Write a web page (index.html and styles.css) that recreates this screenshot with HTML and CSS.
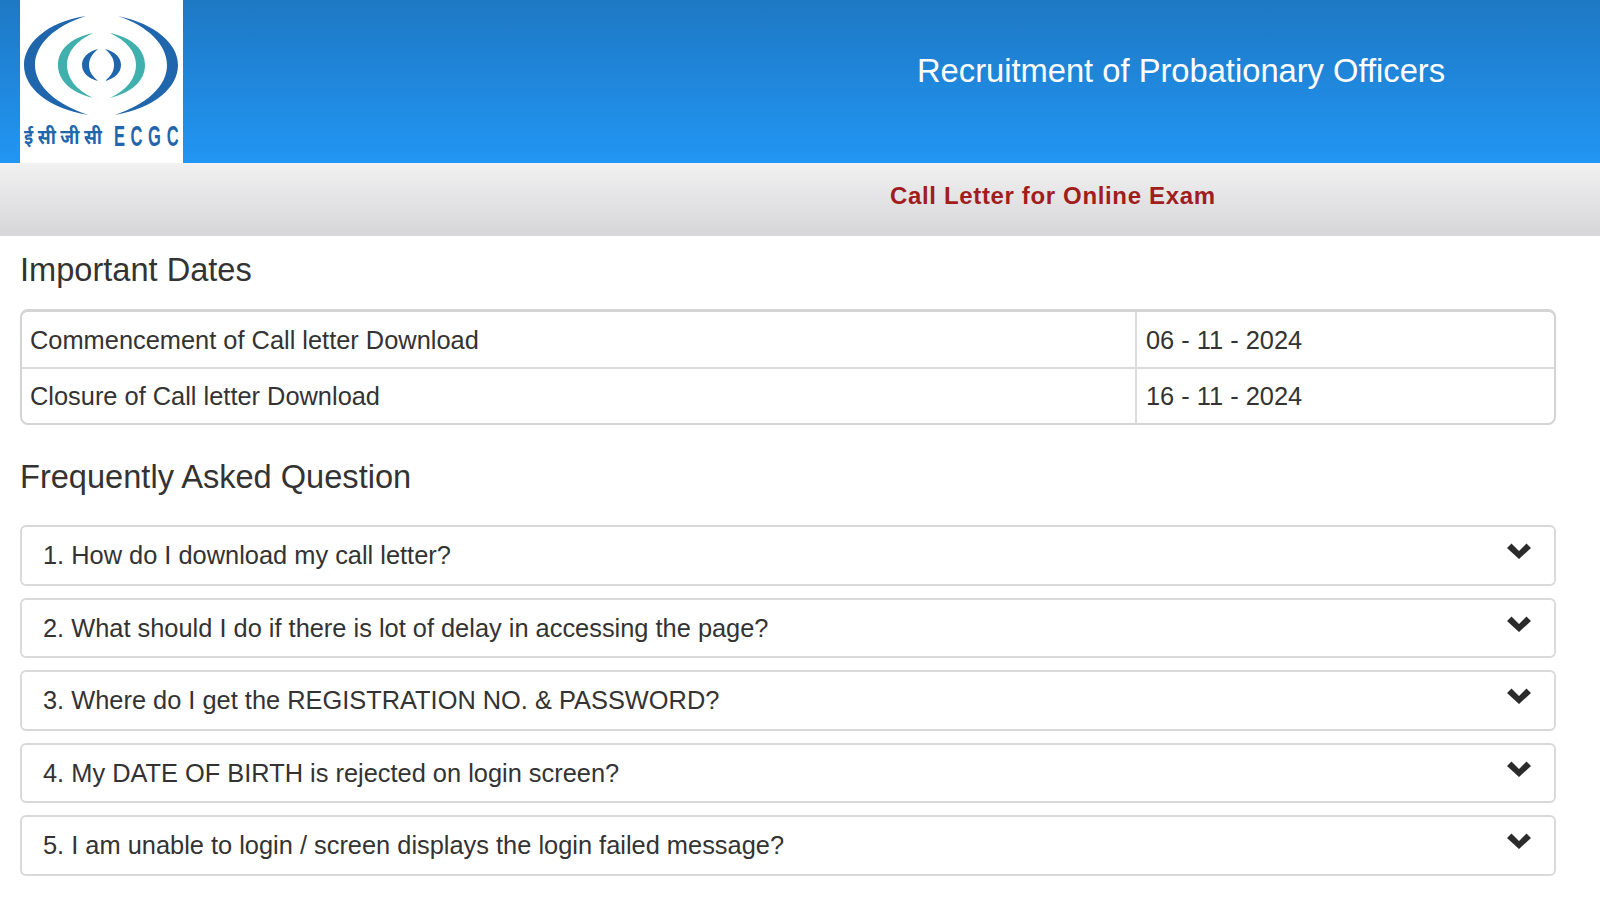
FILE: index.html
```html
<!DOCTYPE html>
<html lang="en">
<head>
<meta charset="utf-8">
<title>Recruitment of Probationary Officers</title>
<link rel="stylesheet" href="styles.css">
</head>
<body>
<header class="banner">
  <div class="logo">
    <svg class="logo-svg" viewBox="0 0 163 163" width="163" height="163">
      <path class="navy" d="M66 16 C26 22 4 44 4 65 C4 88 28 108 68 115 C36 104 15 86 15 65 C15 45 34 26 66 16 Z"/>
      <path class="navy" d="M98 16 C136 24 158 44 158 65 C158 88 134 108 95 115 C127 104 147 86 147 65 C147 45 128 26 98 16 Z"/>
      <path class="teal" d="M73 33 C50 38 38 50 38 65 C38 80 50 92 73 98 C56 90 47 78 47 65 C47 52 56 41 73 33 Z"/>
      <path class="teal" d="M90 33 C113 38 125 50 125 65 C125 80 113 92 90 98 C107 90 116 78 116 65 C116 52 107 41 90 33 Z"/>
      <path class="navy" d="M78 49 C67 52 62 58 62 65 C62 72 67 78 78 81 C72 76 69 71 69 65 C69 59 72 54 78 49 Z"/>
      <path class="navy" d="M85 49 C96 52 101 58 101 65 C101 72 96 78 85 81 C91 76 94 71 94 65 C94 59 91 54 85 49 Z"/>
      <text class="logo-hi" x="4" y="144" textLength="78" lengthAdjust="spacingAndGlyphs">ई सी जी सी</text>
      <text class="logo-en" transform="translate(94 146) scale(.55 1)" x="0 30 62 96" y="0">ECGC</text>
    </svg>
  </div>
  <h1 class="banner-title">Recruitment of Probationary Officers</h1>
</header>
<div class="subbar"><h2 class="subbar-title">Call Letter for Online Exam</h2></div>
<main class="content">
  <h3 class="section-title">Important Dates</h3>
  <div class="dates">
    <div class="date-row">
      <div class="date-label">Commencement of Call letter Download</div>
      <div class="date-value">06 - 11 - 2024</div>
    </div>
    <div class="date-row">
      <div class="date-label">Closure of Call letter Download</div>
      <div class="date-value">16 - 11 - 2024</div>
    </div>
  </div>
  <h3 class="section-title faq-title">Frequently Asked Question</h3>
  <div class="faq">
    <div class="faq-item"><span>1. How do I download my call letter?</span><svg class="chev" viewBox="0 0 24 16"><path d="M0 5 L4.5 .5 L12 8 L19.5 .5 L24 5 L12 16 Z"/></svg></div>
    <div class="faq-item"><span>2. What should I do if there is lot of delay in accessing the page?</span><svg class="chev" viewBox="0 0 24 16"><path d="M0 5 L4.5 .5 L12 8 L19.5 .5 L24 5 L12 16 Z"/></svg></div>
    <div class="faq-item"><span>3. Where do I get the REGISTRATION NO. &amp; PASSWORD?</span><svg class="chev" viewBox="0 0 24 16"><path d="M0 5 L4.5 .5 L12 8 L19.5 .5 L24 5 L12 16 Z"/></svg></div>
    <div class="faq-item"><span>4. My DATE OF BIRTH is rejected on login screen?</span><svg class="chev" viewBox="0 0 24 16"><path d="M0 5 L4.5 .5 L12 8 L19.5 .5 L24 5 L12 16 Z"/></svg></div>
    <div class="faq-item"><span>5. I am unable to login / screen displays the login failed message?</span><svg class="chev" viewBox="0 0 24 16"><path d="M0 5 L4.5 .5 L12 8 L19.5 .5 L24 5 L12 16 Z"/></svg></div>
  </div>
</main>
</body>
</html>
```

FILE: styles.css
```css
* { box-sizing: border-box; }
html, body { margin: 0; padding: 0; }
body {
  width: 1600px;
  height: 900px;
  overflow: hidden;
  background: #fff;
  color: #333;
  font-family: "Liberation Sans", Arial, sans-serif;
}
.banner {
  display: flex;
  height: 163px;
  background: linear-gradient(to bottom, #1e78c4, #2196f3);
}
.logo {
  width: 163px;
  height: 163px;
  margin-left: 20px;
  background: #fff;
  flex: none;
}
.logo-svg { display: block; }
.navy { fill: #1f66ad; }
.teal { fill: #3fb0ad; }
.logo-hi {
  font-family: "Noto Sans", "Liberation Sans", sans-serif;
  font-size: 20px;
  font-weight: 700;
  fill: #1f66ad;
}
.logo-en {
  font-family: "Liberation Sans", sans-serif;
  font-size: 30px;
  font-weight: 700;
  fill: #1f66ad;
}
.banner-title {
  margin: 0;
  padding: 53px 0 0 734px;
  font-size: 32.7px;
  line-height: 36px;
  font-weight: 400;
  color: #fff;
  white-space: nowrap;
}
.subbar {
  height: 73px;
  padding: 20px 0 0 890px;
  background: linear-gradient(to bottom, #f1f1f2, #d6d6d8);
}
.subbar-title {
  margin: 0;
  font-size: 24px;
  line-height: 26px;
  font-weight: 700;
  letter-spacing: .65px;
  color: #a11d1d;
}
.content { padding: 0 44px 0 20px; }
.section-title {
  margin: 0;
  padding-top: 16px;
  font-size: 32.6px;
  line-height: 36px;
  font-weight: 400;
}
.faq-title { padding-top: 34px; }
.dates {
  margin-top: 21px;
  height: 116px;
  border: 2px solid #d4d4d4;
  border-top-width: 3px;
  border-radius: 8px;
}
.date-row {
  display: flex;
  height: 55px;
  font-size: 25.4px;
  line-height: 57px;
}
.date-row + .date-row { height: 56px; line-height: 55px; border-top: 2px solid #dcdcdc; }
.date-label { width: 1113px; padding-left: 8px; }
.date-value { flex: 1; padding-left: 9px; border-left: 2px solid #dcdcdc; }
.faq { margin-top: 30px; }
.faq-item {
  display: flex;
  justify-content: space-between;
  height: 60.5px;
  margin-bottom: 12px;
  padding: 0 23px 0 21px;
  border: 2px solid #d9d9d9;
  border-radius: 6px;
  font-size: 25.4px;
  line-height: 56px;
}
.chev {
  width: 24px;
  height: 16px;
  margin-top: 16px;
  fill: #2b2b2b;
}
```
